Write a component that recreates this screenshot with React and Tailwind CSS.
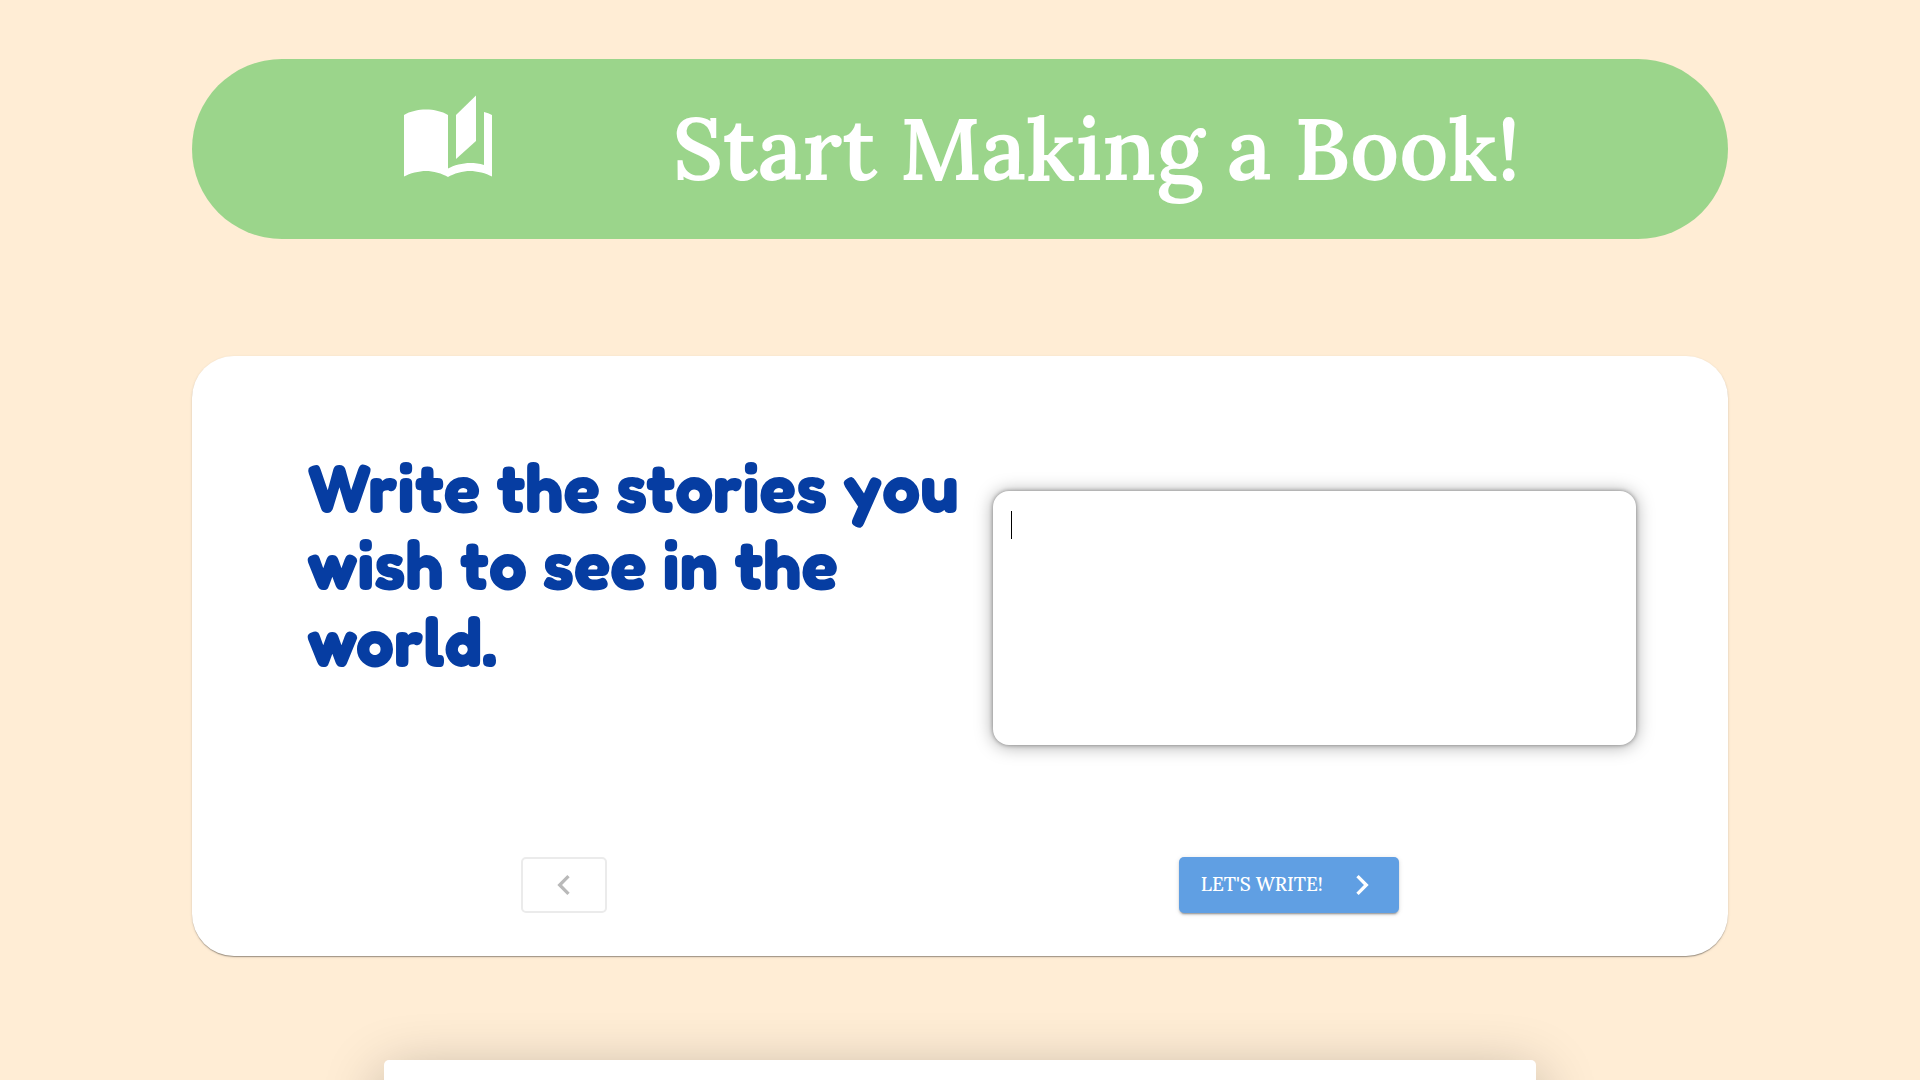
import React, { useState } from 'react';

const SERIF = "font-['Lora','Liberation_Serif',serif]";
const ROUNDED = "font-['Fredoka','Lato',sans-serif]";

function BookIcon() {
  return (
    <svg viewBox="0 0 24 24" className="size-24 fill-white" aria-hidden="true">
      <path d="M19 1.1l-5 4.9v11l5-4.5z" />
      <path d="M23 21.4V6c-.6-.3-1.25-.55-2-.75V18.5c-1.1-.35-2.3-.5-3.5-.5-1.7 0-4.15.55-5.5 1.4V6c-1.45-.95-3.55-1.4-5.5-1.4S2.45 5.05 1 6v15.4c1.45-.85 3.8-1.4 5.5-1.4s4.15.65 5.5 1.5c1.35-.85 3.8-1.5 5.5-1.5s4.05.55 5.5 1.4z" />
    </svg>
  );
}

function Chevron({ direction }) {
  return (
    <svg viewBox="0 0 24 24" className="size-10 fill-current" aria-hidden="true">
      {direction === 'left' ? (
        <path d="M15.41 7.41 14 6l-6 6 6 6 1.41-1.41L10.83 12z" />
      ) : (
        <path d="M10 6 8.59 7.41 13.17 12l-4.58 4.59L10 18l6-6z" />
      )}
    </svg>
  );
}

function Banner() {
  return (
    <header className="mx-auto flex h-[180px] w-4/5 shrink-0 items-center rounded-full bg-[#9bd58b] px-[208px]">
      <div className="mb-5 shrink-0">
        <BookIcon />
      </div>
      <h1 className={`${SERIF} ml-auto text-[86px] leading-none font-semibold whitespace-nowrap text-white`}>
        Start Making a Book!
      </h1>
    </header>
  );
}

function StoryCard() {
  const [story, setStory] = useState('');

  return (
    <main className="mx-auto mt-[117px] flex h-[600px] w-4/5 shrink-0 flex-col rounded-[42px] bg-white shadow-[0_2px_1px_-1px_rgba(0,0,0,0.2),0_1px_1px_0_rgba(0,0,0,0.14),0_1px_3px_0_rgba(0,0,0,0.12)]">
      <div className="flex flex-1 pr-[6%] pl-[7.5%]">
        <div className="flex-1 pt-[93px]">
          <label
            htmlFor="story"
            className={`${ROUNDED} block text-[68px] leading-[77px] font-bold text-[#063da2]`}
          >
            Write the stories you wish to see in the world.
          </label>
        </div>
        <div className="relative mt-[135px] h-[254px] w-[48.4%]">
          <textarea
            id="story"
            value={story}
            onChange={(e) => setStory(e.target.value)}
            className={`${SERIF} block size-full resize-none rounded-2xl bg-white p-4 text-xl text-gray-900 caret-transparent shadow-[0_0_4px_rgba(0,0,0,0.4),0_1px_18px_rgba(0,0,0,0.35)] outline-none`}
          />
          {story === '' && <span className="absolute top-5 left-[18px] h-7 w-px bg-black" />}
        </div>
      </div>
      <div className="mb-[43px] grid grid-cols-2 items-center justify-items-center pr-[77px] pl-[10px]">
        <button
          type="button"
          disabled
          aria-label="Previous"
          className="flex h-14 w-[86px] items-center justify-center rounded-[5px] border-2 border-[#ebebeb] text-[#b9b9b9]"
        >
          <Chevron direction="left" />
        </button>
        <button
          type="button"
          className={`${SERIF} flex h-14 w-[220px] items-center justify-between rounded-[5px] bg-[#609fe3] pr-[17px] pl-[22px] text-[19px] font-medium text-white shadow-[0_3px_1px_-2px_rgba(0,0,0,0.2),0_2px_2px_0_rgba(0,0,0,0.14),0_1px_5px_0_rgba(0,0,0,0.12)]`}
        >
          <span className="mb-0.5">LET'S WRITE!</span>
          <Chevron direction="right" />
        </button>
      </div>
    </main>
  );
}

export default function App() {
  return (
    <div className="flex h-screen flex-col overflow-hidden bg-[#ffedd5] pt-[59px]">
      <Banner />
      <StoryCard />
      <section className="mx-auto mt-26 h-96 w-3/5 shrink-0 rounded-[5px] bg-white shadow-[0_16px_60px_rgba(0,0,0,0.3)]" />
    </div>
  );
}
